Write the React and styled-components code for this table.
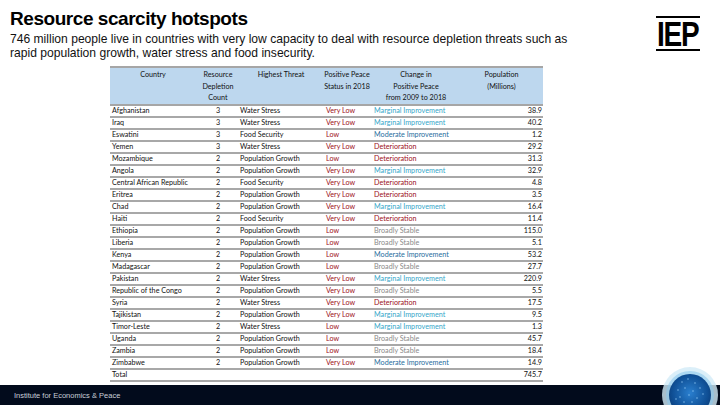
import React from "react";
import styled, { createGlobalStyle } from "styled-components";

const GlobalStyle = createGlobalStyle`
  html, body {
    margin: 0;
    padding: 0;
    background: #ffffff;
  }
  body {
    font-family: "Liberation Sans", Arial, sans-serif;
  }
`;

const RED = "#9c0f1a";
const CYAN = "#35a6c9";
const BLUE = "#1f6e9e";
const GREY = "#8a8a8a";

const changeColor = {
  "Marginal Improvement": CYAN,
  "Moderate Improvement": BLUE,
  Deterioration: RED,
  "Broadly Stable": GREY,
};

const rows = [
  ["Afghanistan", 3, "Water Stress", "Very Low", "Marginal Improvement", "38.9"],
  ["Iraq", 3, "Water Stress", "Very Low", "Marginal Improvement", "40.2"],
  ["Eswatini", 3, "Food Security", "Low", "Moderate Improvement", "1.2"],
  ["Yemen", 3, "Water Stress", "Very Low", "Deterioration", "29.2"],
  ["Mozambique", 2, "Population Growth", "Low", "Deterioration", "31.3"],
  ["Angola", 2, "Population Growth", "Very Low", "Marginal Improvement", "32.9"],
  ["Central African Republic", 2, "Food Security", "Very Low", "Deterioration", "4.8"],
  ["Eritrea", 2, "Population Growth", "Very Low", "Deterioration", "3.5"],
  ["Chad", 2, "Population Growth", "Very Low", "Marginal Improvement", "16.4"],
  ["Haiti", 2, "Food Security", "Very Low", "Deterioration", "11.4"],
  ["Ethiopia", 2, "Population Growth", "Low", "Broadly Stable", "115.0"],
  ["Liberia", 2, "Population Growth", "Low", "Broadly Stable", "5.1"],
  ["Kenya", 2, "Population Growth", "Low", "Moderate Improvement", "53.2"],
  ["Madagascar", 2, "Population Growth", "Low", "Broadly Stable", "27.7"],
  ["Pakistan", 2, "Water Stress", "Very Low", "Marginal Improvement", "220.9"],
  ["Republic of the Congo", 2, "Population Growth", "Very Low", "Broadly Stable", "5.5"],
  ["Syria", 2, "Water Stress", "Very Low", "Deterioration", "17.5"],
  ["Tajikistan", 2, "Population Growth", "Very Low", "Marginal Improvement", "9.5"],
  ["Timor-Leste", 2, "Water Stress", "Low", "Marginal Improvement", "1.3"],
  ["Uganda", 2, "Population Growth", "Low", "Broadly Stable", "45.7"],
  ["Zambia", 2, "Population Growth", "Low", "Broadly Stable", "18.4"],
  ["Zimbabwe", 2, "Population Growth", "Very Low", "Moderate Improvement", "14.9"],
];

const Page = styled.div`
  position: relative;
  width: 720px;
  height: 405px;
  overflow: hidden;
  display: flex;
  flex-direction: column;
`;

const Top = styled.div`
  display: flex;
  justify-content: space-between;
  padding: 8px 20px 0 10px;
  height: 58px;
  box-sizing: border-box;
`;

const Heading = styled.div`
  display: flex;
  flex-direction: column;
`;

const Title = styled.h1`
  margin: 0;
  font-family: "Liberation Sans", Arial, sans-serif;
  font-weight: bold;
  font-size: 19px;
  line-height: 22px;
  letter-spacing: -0.45px;
  color: #000;
`;

const Subtitle = styled.p`
  margin: 2px 0 0;
  width: 580px;
  font-family: "Liberation Sans", Arial, sans-serif;
  font-size: 12.1px;
  line-height: 14px;
  color: #111;
`;

const Logo = styled.div`
  width: 44px;
  margin-top: 8px;
  border-top: 2.5px solid #000;
  border-bottom: 2.5px solid #000;
  height: 31px;
  display: flex;
  align-items: center;
  overflow: visible;
`;

const LogoText = styled.span`
  display: inline-block;
  font-family: "Liberation Sans", Arial, sans-serif;
  font-weight: bold;
  font-size: 35px;
  line-height: 31px;
  letter-spacing: -1.5px;
  transform: scaleX(0.8);
  transform-origin: left center;
  margin-left: 1px;
  color: #000;
`;

const Body = styled.div`
  flex: 1;
  padding: 8px 0 0 110px;
`;

const Table = styled.table`
  border-collapse: collapse;
  table-layout: fixed;
  width: 433px;
  font-family: Lato, "Open Sans", sans-serif;
  font-size: 7.2px;
  color: #111;
`;

const HeadRow = styled.tr`
  background: #bdd7ee;
  border-top: 2px solid #a6a6a6;
  border-bottom: 2px solid #a6a6a6;
`;

const Th = styled.th`
  height: 34px;
  padding: 1px 0 0;
  vertical-align: top;
  text-align: center;
  font-weight: normal;
  line-height: 11.5px;
`;

const Tr = styled.tr`
  border-bottom: 2px solid #a8a8a8;
`;

const Td = styled.td`
  height: 10px;
  padding: 0 ${(p) => p.$pr || 0}px 0 ${(p) => p.$pl || 0}px;
  line-height: 10px;
  white-space: nowrap;
  text-align: ${(p) => p.$align || "left"};
  color: ${(p) => p.$color || "#111"};
`;

const Footer = styled.div`
  height: 20px;
  background: #020b1c;
  display: flex;
  align-items: center;
  padding-left: 14px;
  font-family: "Liberation Sans", Arial, sans-serif;
  font-size: 7.5px;
  color: #c9ced8;
`;

const GlobeSvg = styled.svg`
  position: absolute;
  left: 660px;
  top: 364px;
`;

const Globe = () => (
  <GlobeSvg width="60" height="41" viewBox="0 0 60 41">
    <defs>
      <radialGradient id="g" cx="0.5" cy="0.45" r="0.6">
        <stop offset="0" stopColor="#2a7fcf" />
        <stop offset="0.7" stopColor="#0f4f95" />
        <stop offset="1" stopColor="#0a3a75" />
      </radialGradient>
    </defs>
    <circle cx="30" cy="31" r="28" fill="#d2ebf8" opacity="0.8" />
    <circle cx="30" cy="31" r="24" fill="#8cc8ec" opacity="0.6" />
    <circle cx="30" cy="31" r="21" fill="url(#g)" />
    {[
      [22, 18], [28, 15], [35, 19], [18, 26], [25, 24], [33, 27], [40, 24],
      [20, 33], [29, 31], [37, 34], [43, 30], [24, 38], [32, 38], [16, 35],
    ].map(([x, y], i) => (
      <circle key={i} cx={x} cy={y} r="0.8" fill="#9fd6ff" opacity="0.7" />
    ))}
  </GlobeSvg>
);

export default function App() {
  return (
    <Page>
      <GlobalStyle />
      <Top>
        <Heading>
          <Title>Resource scarcity hotspots</Title>
          <Subtitle>
            746 million people live in countries with very low capacity to deal with resource depletion threats such as
            <br />
            rapid population growth, water stress and food insecurity.
          </Subtitle>
        </Heading>
        <Logo>
          <LogoText>IEP</LogoText>
        </Logo>
      </Top>
      <Body>
        <Table>
          <colgroup>
            <col style={{ width: 86 }} />
            <col style={{ width: 44 }} />
            <col style={{ width: 82 }} />
            <col style={{ width: 50 }} />
            <col style={{ width: 88 }} />
            <col style={{ width: 83 }} />
          </colgroup>
          <thead>
            <HeadRow>
              <Th>Country</Th>
              <Th>Resource<br />Depletion<br />Count</Th>
              <Th>Highest Threat</Th>
              <Th>Positive Peace<br />Status in 2018</Th>
              <Th>Change in<br />Positive Peace<br />from 2009 to 2018</Th>
              <Th>Population<br />(Millions)</Th>
            </HeadRow>
          </thead>
          <tbody>
            {rows.map(([c, n, t, s, ch, p]) => (
              <Tr key={c}>
                <Td $pl={2}>{c}</Td>
                <Td $align="center">{n}</Td>
                <Td>{t}</Td>
                <Td $pl={4} $color={RED}>{s}</Td>
                <Td $pl={2} $color={changeColor[ch]}>{ch}</Td>
                <Td $align="right" $pr={1}>{p}</Td>
              </Tr>
            ))}
            <Tr>
              <Td $pl={2}>Total</Td>
              <Td />
              <Td />
              <Td />
              <Td />
              <Td $align="right" $pr={1}>745.7</Td>
            </Tr>
          </tbody>
        </Table>
      </Body>
      <Footer>Institute for Economics &amp; Peace</Footer>
      <Globe />
    </Page>
  );
}
